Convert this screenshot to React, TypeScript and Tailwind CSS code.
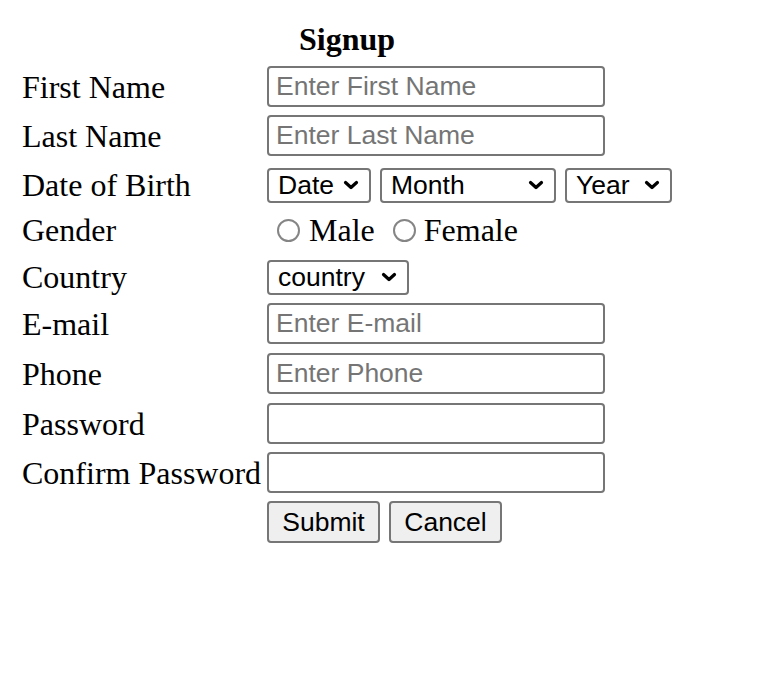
import React from "react";

const serif = { fontFamily: '"Liberation Serif", "Times New Roman", serif' };
const sans = { fontFamily: '"Liberation Sans", Arial, sans-serif' };

function Chevron() {
  return (
    <svg width="16" height="10" viewBox="0 0 16 10" className="shrink-0">
      <polyline points="2.5,2.5 8,7.5 13.5,2.5" fill="none" stroke="#000" strokeWidth="3.2" strokeLinecap="round" strokeLinejoin="round" />
    </svg>
  );
}

function FakeSelect({ label, w }: { label: string; w: string }) {
  return (
    <div
      className={`flex h-[35px] items-center justify-between rounded-[4px] border-2 border-[#767676] bg-white pl-[9px] pr-[10px] text-[26.5px] leading-none text-black ${w}`}
      style={sans}
    >
      <span>{label}</span>
      <Chevron />
    </div>
  );
}

function TextInput({ placeholder, type = "text" }: { placeholder?: string; type?: string }) {
  return (
    <input
      type={type}
      placeholder={placeholder}
      className="box-border h-[41px] w-[338px] rounded-[4px] border-2 border-[#767676] bg-white px-[7px] text-[26.5px] text-black outline-none placeholder:text-[#757575]"
      style={sans}
    />
  );
}

function Radio() {
  return <span className="inline-block h-[23px] w-[23px] shrink-0 rounded-full border-2 border-[#858585] bg-white" />;
}

function Row({ label, children, mt }: { label: string; children: React.ReactNode; mt: string }) {
  return (
    <div className={`flex items-center ${mt}`}>
      <div className="w-[245px] shrink-0 text-[32px] leading-9 text-black whitespace-nowrap" style={serif}>
        {label}
      </div>
      <div className="flex items-center">{children}</div>
    </div>
  );
}

export default function App() {
  return (
    <div className="min-h-[695px] w-[761px] bg-white pl-[22px] pt-[21px]">
      <div className="w-[650px] text-center text-[32px] font-bold leading-9 text-black" style={serif}>
        Signup
      </div>

      <Row label="First Name" mt="mt-[9px]">
        <TextInput placeholder="Enter First Name" />
      </Row>
      <Row label="Last Name" mt="mt-[8px]">
        <TextInput placeholder="Enter Last Name" />
      </Row>
      <Row label="Date of Birth" mt="mt-[11px]">
        <div className="flex items-center gap-[9px]">
          <FakeSelect label="Date" w="w-[104px]" />
          <FakeSelect label="Month" w="w-[176px]" />
          <FakeSelect label="Year" w="w-[107px]" />
        </div>
      </Row>
      <Row label="Gender" mt="mt-[9px]">
        <div className="flex h-9 items-center pl-[10px] text-[32px] leading-9 text-black" style={serif}>
          <Radio />
          <span className="ml-[9px]">Male</span>
          <span className="ml-[18px] flex">
            <Radio />
          </span>
          <span className="ml-[8px]">Female</span>
        </div>
      </Row>
      <Row label="Country" mt="mt-[11px]">
        <FakeSelect label="country" w="w-[142px]" />
      </Row>
      <Row label="E-mail" mt="mt-[8px]">
        <TextInput placeholder="Enter E-mail" />
      </Row>
      <Row label="Phone" mt="mt-[9px]">
        <TextInput placeholder="Enter Phone" />
      </Row>
      <Row label="Password" mt="mt-[9px]">
        <TextInput type="password" />
      </Row>
      <Row label="Confirm Password" mt="mt-[8px]">
        <TextInput type="password" />
      </Row>
      <div className="mt-[8px] flex items-center pl-[245px]">
        <div className="flex items-center gap-[9px]">
          <button
            className="h-[42px] w-[113px] rounded-[4px] border-2 border-[#767676] bg-[#efefef] text-[26.5px] text-black"
            style={sans}
          >
            Submit
          </button>
          <button
            className="h-[42px] w-[113px] rounded-[4px] border-2 border-[#767676] bg-[#efefef] text-[26.5px] text-black"
            style={sans}
          >
            Cancel
          </button>
        </div>
      </div>
    </div>
  );
}
